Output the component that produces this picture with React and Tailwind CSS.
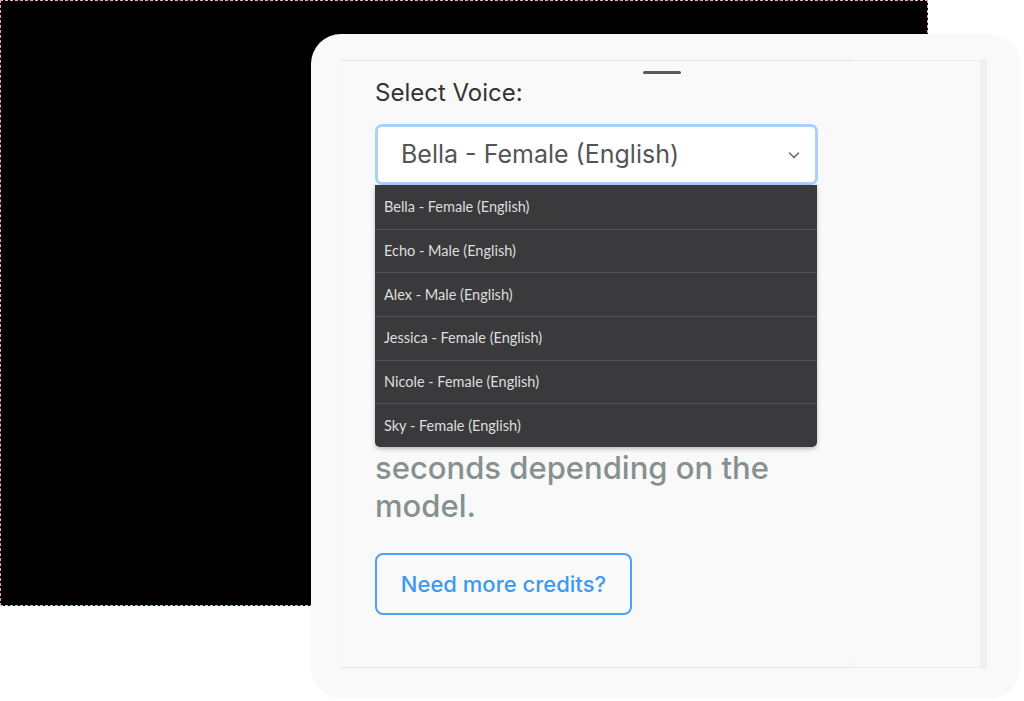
import React, { useState } from "react";

const voices = [
  "Bella - Female (English)",
  "Echo - Male (English)",
  "Alex - Male (English)",
  "Jessica - Female (English)",
  "Nicole - Female (English)",
  "Sky - Female (English)",
];

function Chevron() {
  return (
    <svg width="14" height="14" viewBox="0 0 14 14" fill="none">
      <path d="M2.5 5l4.5 4.5L11.5 5" stroke="#6b6b6b" strokeWidth="1.6" strokeLinecap="round" strokeLinejoin="round" />
    </svg>
  );
}

function VoicePicker() {
  const [voice, setVoice] = useState(voices[0]);
  const [open, setOpen] = useState(true);

  return (
    <div className="relative w-[443px]">
      <button
        type="button"
        onClick={() => setOpen(!open)}
        className="flex h-[61px] w-full items-center justify-between rounded-[7px] border-[3px] border-[#a9d1fb] bg-white pl-[23px] pr-[14px] text-left"
      >
        <span className="text-[25px] text-[#555]">{voice}</span>
        <Chevron />
      </button>
      {open && (
        <ul className="absolute left-0 top-[61px] w-[442px] overflow-hidden rounded-b-[5px] bg-[#3a3a3c] shadow-[0_2px_4px_rgba(0,0,0,0.25)] font-['Lato',sans-serif]">
          {voices.map((v, i) => (
            <li
              key={v}
              onClick={() => {
                setVoice(v);
                setOpen(false);
              }}
              className={
                "flex h-[43.67px] items-center pl-[9px] text-[14.5px] text-[#dedede] " +
                (i > 0 ? "border-t border-[#545456]" : "")
              }
            >
              {v}
            </li>
          ))}
        </ul>
      )}
    </div>
  );
}

export default function App() {
  return (
    <div className="grid h-[701px] w-[1024px] overflow-hidden bg-white font-['Inter',sans-serif]">
      <div className="[grid-area:1/1] h-[606px] w-[928px] border border-dashed border-[#f0a8a8] bg-black" />

      <div className="[grid-area:1/1] ml-[311px] mt-[34px] h-[664px] w-[709px] rounded-[30px] bg-[#f9f9f9] pl-[29px] pt-[26px]">
        <div className="relative flex h-[608px] w-[647px] border-t border-b border-[#ececec]">
          <div className="absolute left-[303px] top-[10px] h-[3px] w-[38px] rounded-full bg-[#5a5a5a]" />

          <div className="flex w-[513px] flex-col rounded-br-[6px] bg-[#f9f9f9] pl-[35px] pt-[16px] shadow-[1px_0_3px_rgba(0,0,0,0.07)]">
            <h3 className="text-[24px] leading-[32px] text-[#333]">Select Voice:</h3>
            <div className="mt-[15px]">
              <VoicePicker />
            </div>
            <p className="mt-[264px] w-[443px] text-[31px] font-medium leading-[38px] text-[#86918f]">
              seconds depending on the model.
            </p>
            <button
              type="button"
              className="mt-[28px] h-[62px] w-[257px] rounded-[8px] border-2 border-[#4da0f5] text-[22px] font-medium text-[#3d9af0]"
            >
              Need more credits?
            </button>
          </div>

          <div className="flex-1 bg-[#f9f9f9]" />
          <div className="w-[7px] bg-[#efefef]" />
        </div>
      </div>
    </div>
  );
}
